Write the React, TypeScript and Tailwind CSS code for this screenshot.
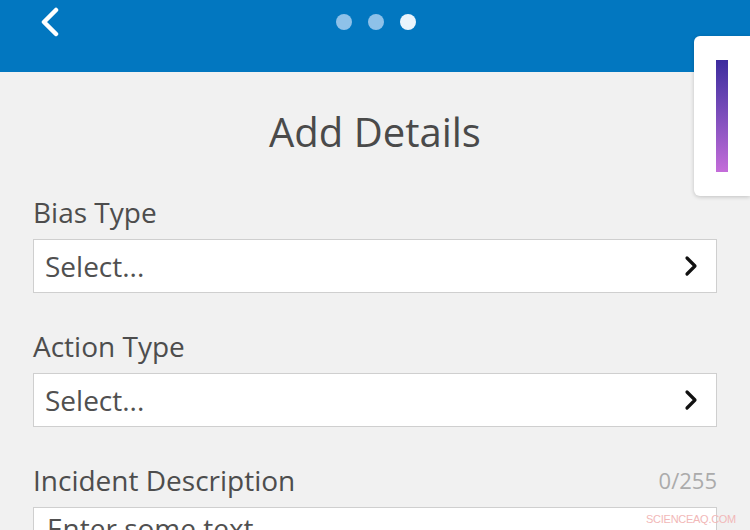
export default function App() {
    const font = { fontFamily: '"Open Sans", "Noto Sans", sans-serif' };

    return (
        <div className="relative w-[750px] h-[530px] overflow-hidden bg-[#f1f1f1]" style={font}>
            {/* top bar */}
            <div className="h-[72px] bg-[#0277c0] grid grid-cols-[1fr_auto_1fr] items-start">
                <div className="pl-[38px] pt-[7px]">
                    <svg width="24" height="30" viewBox="0 0 24 30" fill="none">
                        <polyline points="18,3 6,15 18,27" stroke="#ffffff" strokeWidth="4.5" strokeLinecap="round" strokeLinejoin="round" />
                    </svg>
                </div>
                <div className="flex gap-[16px] pt-[14px] pl-[2px]">
                    <span className="w-[16px] h-[16px] rounded-full bg-[#8ec1e9]" />
                    <span className="w-[16px] h-[16px] rounded-full bg-[#8ec1e9]" />
                    <span className="w-[16px] h-[16px] rounded-full bg-[#eaf4fc]" />
                </div>
                <div />
            </div>

            {/* form */}
            <div className="flex flex-col px-[33px]">
                <h1 className="pt-[36px] text-center text-[40px] leading-[48px] text-[#4a4a4a]">Add Details</h1>

                <label className="mt-[38px] text-[28px] leading-[36px] text-[#4d4d4d]">Bias Type</label>
                <div className="mt-[9px] h-[54px] flex items-center justify-between border border-[#cfcfcf] bg-white pl-[11px] pr-[18px]">
                    <span className="text-[28px] text-[#505050]">Select...</span>
                    <svg width="14" height="22" viewBox="0 0 14 22" fill="none">
                        <polyline points="3,3 11,11 3,19" stroke="#111111" strokeWidth="3.2" strokeLinecap="round" strokeLinejoin="round" />
                    </svg>
                </div>

                <label className="mt-[35px] text-[28px] leading-[36px] text-[#4d4d4d]">Action Type</label>
                <div className="mt-[9px] h-[54px] flex items-center justify-between border border-[#cfcfcf] bg-white pl-[11px] pr-[18px]">
                    <span className="text-[28px] text-[#505050]">Select...</span>
                    <svg width="14" height="22" viewBox="0 0 14 22" fill="none">
                        <polyline points="3,3 11,11 3,19" stroke="#111111" strokeWidth="3.2" strokeLinecap="round" strokeLinejoin="round" />
                    </svg>
                </div>

                <div className="mt-[35px] flex items-center justify-between leading-[36px]">
                    <label className="text-[28px] text-[#4d4d4d]">Incident Description</label>
                    <span className="text-[22px] text-[#ababab]">0/255</span>
                </div>
                <div className="mt-[9px] h-[80px] border border-[#cfcfcf] bg-white pl-[13px] pt-[2px]">
                    <span className="text-[28px] leading-[36px] text-[#505050]">Enter some text</span>
                </div>
            </div>

            {/* floating side tab */}
            <div className="absolute right-0 top-[36px] w-[56px] h-[160px] bg-white rounded-l-[6px] shadow-[0_1px_4px_rgba(0,0,0,0.2)] pl-[22px] pt-[24px]">
                <div className="w-[12px] h-[112px] bg-gradient-to-b from-[#3d2b9e] to-[#c46cd9]" />
            </div>

            <span className="absolute right-[14px] bottom-[3px] text-[11px] tracking-tight text-[#f2b8b8]" style={{ fontFamily: '"Liberation Sans", sans-serif' }}>
                SCIENCEAQ.COM
            </span>
        </div>
    );
}
